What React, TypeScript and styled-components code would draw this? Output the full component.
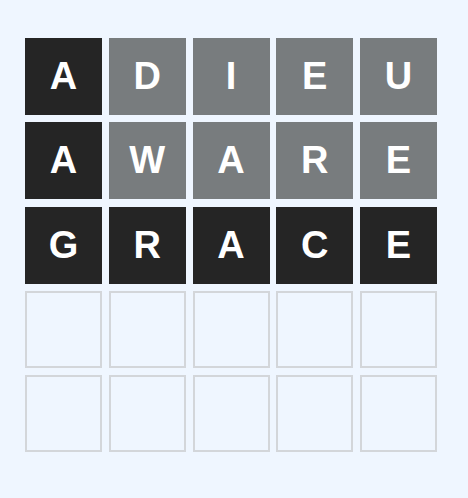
import React from "react";
import styled, { createGlobalStyle } from "styled-components";

const Global = createGlobalStyle`
  html, body { margin: 0; padding: 0; background: #eff6ff; }
  body { font-family: "Liberation Sans", Arial, sans-serif; }
`;

type State = "absent" | "present" | "empty";

const Page = styled.div`
  width: 468px;
  height: 498px;
  box-sizing: border-box;
  padding: 38px 0 0 25px;
`;

const Board = styled.div`
  display: grid;
  grid-template-columns: repeat(5, 77px);
  grid-auto-rows: 77px;
  column-gap: 6.75px;
  row-gap: 7.25px;
`;

const Tile = styled.div<{ $state: State }>`
  box-sizing: border-box;
  display: flex;
  align-items: center;
  justify-content: center;
  font-size: 38px;
  font-weight: 700;
  color: #ffffff;
  text-transform: uppercase;
  background: ${(p) =>
    p.$state === "absent" ? "#252525" : p.$state === "present" ? "#787c7e" : "transparent"};
  border: ${(p) => (p.$state === "empty" ? "2px solid #d3d6da" : "none")};
`;

const rows: { word: string; states: State[] }[] = [
  { word: "ADIEU", states: ["absent", "present", "present", "present", "present"] },
  { word: "AWARE", states: ["absent", "present", "present", "present", "present"] },
  { word: "GRACE", states: ["absent", "absent", "absent", "absent", "absent"] },
  { word: "     ", states: ["empty", "empty", "empty", "empty", "empty"] },
  { word: "     ", states: ["empty", "empty", "empty", "empty", "empty"] },
];

export default function App() {
  return (
    <Page>
      <Global />
      <Board>
        {rows.map((r, i) =>
          r.states.map((s, j) => (
            <Tile key={`${i}-${j}`} $state={s}>
              {r.word[j].trim()}
            </Tile>
          ))
        )}
      </Board>
    </Page>
  );
}
